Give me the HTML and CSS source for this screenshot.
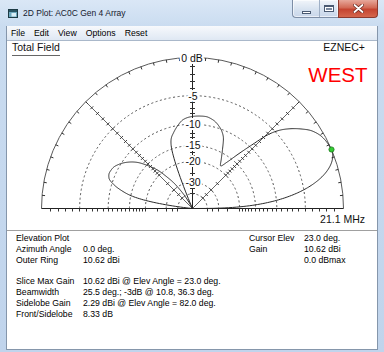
FILE: index.html
```html
<!DOCTYPE html>
<html>
<head>
<meta charset="utf-8">
<title>2D Plot: AC0C Gen 4 Array</title>
<link rel="stylesheet" href="styles.css">
</head>
<body>
<div class="window">
  <div class="titlebar">
    <svg class="app-icon" width="10" height="9" viewBox="0 0 10 9">
      <rect x="0.5" y="0.5" width="9" height="8" fill="#6fa9bf" stroke="#1d3b45"/>
      <rect x="1" y="1" width="8" height="2" fill="#2a5563"/>
      <rect x="3.5" y="4" width="4.5" height="3.5" fill="#d9eef6"/>
    </svg>
    <span class="title">2D Plot: AC0C Gen 4 Array</span>
    <div class="caption-buttons">
      <div class="cap-group">
        <div class="cap-btn cap-min"><span class="glyph-min"></span></div>
        <div class="cap-btn cap-max"><span class="glyph-max"></span></div>
      </div>
      <div class="cap-btn cap-close">
        <svg width="11" height="9" viewBox="0 0 11 9">
          <path d="M1.5 1 L9.5 8 M9.5 1 L1.5 8" class="x-shadow"/>
          <path d="M1.5 1 L9.5 8 M9.5 1 L1.5 8" class="x-glyph"/>
        </svg>
      </div>
    </div>
  </div>
  <div class="client">
    <div class="menubar">
      <span class="menu-item">File</span>
      <span class="menu-item">Edit</span>
      <span class="menu-item">View</span>
      <span class="menu-item">Options</span>
      <span class="menu-item">Reset</span>
    </div>
    <div class="plot">
      <svg id="plot" width="370" height="189" viewBox="7 41 370 189">
        <g id="grid"></g>
        <g id="pattern"></g>
        <text x="12" y="51" class="caption">Total Field</text>
        <line x1="12" y1="55.5" x2="60" y2="55.5" class="caption-rule"/>
        <text x="365" y="51" class="caption end">EZNEC+</text>
        <text x="367.5" y="81.7" class="direction">WEST</text>
        <text x="365" y="223" class="caption end">21.1 MHz</text>
        <text x="192" y="61.5" class="axlabel">0 dB</text>
        <text x="193" y="99.5" class="axlabel">-5</text>
        <text x="193" y="128" class="axlabel">-10</text>
        <text x="193" y="149.3" class="axlabel">-15</text>
        <text x="193" y="165.3" class="axlabel">-20</text>
        <text x="193" y="186.3" class="axlabel">-30</text>
      </svg>
    </div>
    <div class="info">
      <span>Elevation Plot</span><span></span><span>Cursor Elev</span><span>23.0 deg.</span>
      <span>Azimuth Angle</span><span>0.0 deg.</span><span>Gain</span><span>10.62 dBi</span>
      <span>Outer Ring</span><span>10.62 dBi</span><span></span><span>0.0 dBmax</span>
      <span class="blank"></span>
      <span>Slice Max Gain</span><span class="wide">10.62 dBi @ Elev Angle = 23.0 deg.</span>
      <span>Beamwidth</span><span class="wide">25.5 deg.; -3dB @ 10.8, 36.3 deg.</span>
      <span>Sidelobe Gain</span><span class="wide">2.29 dBi @ Elev Angle = 82.0 deg.</span>
      <span>Front/Sidelobe</span><span class="wide">8.33 dB</span>
    </div>
  </div>
</div>
<script src="plot.js"></script>
</body>
</html>
```

FILE: styles.css
```css
* { box-sizing: border-box; margin: 0; padding: 0; }
html, body { width: 384px; height: 352px; overflow: hidden; }
body {
  background: #c3d6ed;
  font-family: "Liberation Sans", Arial, sans-serif;
  color: #000;
}
.window {
  width: 384px;
  height: 352px;
  display: flex;
  flex-direction: column;
  background: linear-gradient(#dae7f6 0, #cadcf0 26px, #c0d4ec 100%);
}
.titlebar {
  height: 26px;
  display: flex;
  align-items: center;
  flex: none;
}
.app-icon { margin-left: 8px; margin-top: 1px; flex: none; }
.title {
  margin-left: 5px;
  font-size: 8.5px;
  color: #14202e;
  white-space: nowrap;
}
.caption-buttons {
  margin-left: auto;
  margin-right: 6px;
  align-self: flex-start;
  display: flex;
  height: 18px;
}
.cap-group {
  display: flex;
  border: 1px solid #7d8ea6;
  border-top: none;
  border-right: none;
  border-radius: 0 0 0 4px;
  background: linear-gradient(#f1f5fa, #d5e1ef 60%, #c9d7ea);
  box-shadow: inset 0 0 0 1px rgba(255,255,255,0.6);
}
.cap-btn {
  height: 17px;
  display: flex;
  align-items: center;
  justify-content: center;
}
.cap-min { width: 26px; }
.cap-max { width: 19px; border-left: 1px solid #9fb0c6; }
.glyph-min {
  width: 9px;
  height: 3px;
  margin-top: 7px;
  background: #fff;
  border: 1px solid #4a5a72;
}
.glyph-max {
  width: 10px;
  height: 7px;
  border: 1px solid #4a5a72;
  border-top-width: 2px;
  background: #fff;
  box-shadow: inset 0 0 0 1px #fff, inset 0 0 0 2px #7b8aa0;
}
.cap-close {
  width: 40px;
  height: 18px;
  border: 1px solid #8c3a2e;
  border-top: none;
  border-radius: 0 0 4px 0;
  background: linear-gradient(#e7a89b, #d26a56 45%, #c54430 55%, #d5674d);
}
.x-shadow { fill: none; stroke: #6d2b22; stroke-width: 3.4; stroke-linecap: round; }
.x-glyph { fill: none; stroke: #fff; stroke-width: 1.8; stroke-linecap: round; }

.client {
  flex: 1;
  margin: 0 6px 2px 6px;
  display: flex;
  flex-direction: column;
  border: 1px solid #8596ab;
  border-top: none;
  background: #fff;
}
.menubar {
  height: 15px;
  flex: none;
  display: flex;
  align-items: center;
  gap: 9px;
  padding-left: 4px;
  background: linear-gradient(#f7f9fc, #dfe8f3);
  border-bottom: 1px solid #aab8ca;
  font-size: 8.7px;
}
.plot {
  height: 190px;
  flex: none;
  border-bottom: 1px solid #a0a0a0;
}
#plot { display: block; }
.ring { fill: none; stroke: #555; stroke-width: 1; stroke-dasharray: 2 2.5; }
.outer { fill: none; stroke: #5a5a5a; stroke-width: 1; }
.spoke { stroke: #666; stroke-width: 1; }
.axis { stroke: #222; stroke-width: 1; }
.tick { fill: none; stroke: #333; stroke-width: 1; }
.lobe { fill: none; stroke: #2a2a2a; stroke-width: 1; stroke-linejoin: round; }
.cursor-dot { fill: #33cc33; stroke: #1c7a1c; stroke-width: 0.8; }
.caption { font-size: 10.5px; fill: #111; }
.caption.end { text-anchor: end; }
.caption-rule { stroke: #666; stroke-width: 1; }
.direction { font-size: 20.5px; fill: #ff0000; text-anchor: end; }
.axlabel {
  font-size: 10.5px;
  fill: #111;
  text-anchor: middle;
  stroke: #fff;
  stroke-width: 4;
  stroke-linejoin: round;
  paint-order: stroke;
}

.info {
  flex: 1;
  display: grid;
  grid-template-columns: 67px 166px 55px auto;
  grid-auto-rows: 10.8px;
  align-content: start;
  padding: 2px 0 0 9px;
  font-size: 8.7px;
  line-height: 10.8px;
  white-space: nowrap;
}
.info .blank { grid-column: 1 / -1; }
.info .wide { grid-column: 2 / -1; }
```

FILE: plot.js
```js
(function () {
  var NS = 'http://www.w3.org/2000/svg';
  var grid = document.getElementById('grid');
  var pat = document.getElementById('pattern');
  var cx = 192.5, cy = 208.5, R = 151;

  function rOf(db) { return R * Math.pow(0.89, -db / 2); }
  function add(parent, tag, attrs) {
    var e = document.createElementNS(NS, tag);
    for (var k in attrs) e.setAttribute(k, attrs[k]);
    parent.appendChild(e);
    return e;
  }
  function arc(r) {
    return 'M' + (cx - r).toFixed(2) + ' ' + cy + ' A' + r.toFixed(2) + ' ' + r.toFixed(2) + ' 0 0 1 ' + (cx + r).toFixed(2) + ' ' + cy;
  }
  function pt(deg, r) {
    var a = deg * Math.PI / 180;
    return [cx + r * Math.cos(a), cy - r * Math.sin(a)];
  }
  function crisp(v) { return Math.round(v - 0.5) + 0.5; }

  [-5, -10, -15, -20, -30, -40].forEach(function (db) {
    add(grid, 'path', { d: arc(rOf(db)), 'class': 'ring' });
  });
  add(grid, 'path', { d: arc(R), 'class': 'outer' });

  [45, 135].forEach(function (deg) {
    var p = pt(deg, R);
    add(grid, 'line', { x1: cx, y1: cy, x2: p[0].toFixed(2), y2: p[1].toFixed(2), 'class': 'spoke' });
  });
  add(grid, 'line', { x1: cx - R, y1: cy, x2: cx + R, y2: cy, 'class': 'axis' });
  add(grid, 'line', { x1: cx, y1: cy, x2: cx, y2: cy - R, 'class': 'axis' });

  var d = '';
  for (var a = 5; a < 180; a += 5) {
    var p1 = pt(a, R), p2 = pt(a, R - 3);
    d += 'M' + p1[0].toFixed(2) + ' ' + p1[1].toFixed(2) + 'L' + p2[0].toFixed(2) + ' ' + p2[1].toFixed(2);
  }
  var tickDb = [];
  for (var i = 1; i <= 20; i++) tickDb.push(-i);
  tickDb.push(-25, -30, -35, -40);
  tickDb.forEach(function (db) {
    var r = rOf(db);
    [cx - r, cx + r].forEach(function (x) {
      d += 'M' + crisp(x) + ' ' + cy + 'V' + (cy + 3);
    });
    var y = crisp(cy - r);
    d += 'M' + (cx - 2.5) + ' ' + y + 'H' + (cx + 2.5);
    [45, 135].forEach(function (deg) {
      var p = pt(deg, r), an = (deg + 90) * Math.PI / 180;
      var dx = 2 * Math.cos(an), dy = -2 * Math.sin(an);
      d += 'M' + (p[0] - dx).toFixed(2) + ' ' + (p[1] - dy).toFixed(2) + 'L' + (p[0] + dx).toFixed(2) + ' ' + (p[1] + dy).toFixed(2);
    });
  });
  add(grid, 'path', { d: d, 'class': 'tick' });

  var table = [
    [23, 0], [26, -0.12], [29, -0.35], [33, -1.0], [36.3, -2.0], [39, -3.0], [42, -4.4],
    [44.2, -6.0], [47, -9.5], [50, -13], [53, -16.2], [56.5, -18.6], [60, -16.5], [63, -14.2],
    [67, -11.2], [72, -9.6], [77, -8.7], [82, -8.33], [87, -8.4], [92, -8.6], [96, -9.0],
    [100, -10.0], [104, -11.3], [107, -12.5], [109, -14.5], [110.5, -19], [111.5, -26],
    [112.5, -40], [113.5, -70], [115, -999], [117, -999], [119, -60], [121, -42],
    [123.7, -32.7], [126, -27], [128.9, -22.7], [132, -18.6], [136.3, -15.2], [140, -12.8],
    [144.7, -10.9], [149, -9.7], [153, -9.0], [157, -8.8], [160, -9.1], [163.4, -10.6],
    [166, -12.6], [168.2, -15], [170, -19], [171.5, -26], [173, -40], [174.5, -80],
    [176, -999], [180, -999]
  ];
  var xs = table.map(function (t) { return t[0]; });
  var ys = table.map(function (t) { return rOf(t[1]); });

  function pchip(xs, ys) {
    var n = xs.length, h = [], del = [], m = [], k;
    for (k = 0; k < n - 1; k++) { h[k] = xs[k + 1] - xs[k]; del[k] = (ys[k + 1] - ys[k]) / h[k]; }
    m[0] = del[0]; m[n - 1] = del[n - 2];
    for (k = 1; k < n - 1; k++) {
      if (del[k - 1] * del[k] <= 0) m[k] = 0;
      else {
        var w1 = 2 * h[k] + h[k - 1], w2 = h[k] + 2 * h[k - 1];
        m[k] = (w1 + w2) / (w1 / del[k - 1] + w2 / del[k]);
      }
    }
    return function (x) {
      var j = 0;
      while (j < n - 2 && x > xs[j + 1]) j++;
      var t = (x - xs[j]) / h[j], t2 = t * t, t3 = t2 * t;
      return (2 * t3 - 3 * t2 + 1) * ys[j] + (t3 - 2 * t2 + t) * h[j] * m[j] +
        (-2 * t3 + 3 * t2) * ys[j + 1] + (t3 - t2) * h[j] * m[j + 1];
    };
  }
  var f = pchip(xs, ys);

  function radius(th) {
    if (th <= 0) return 0;
    if (th < 23) {
      var s = Math.sin(th * 3.913 * Math.PI / 180);
      return rOf(1.15 * 20 * Math.log(s) / Math.LN10);
    }
    return Math.max(0, f(th));
  }

  var pd = '';
  for (var th = 0; th <= 180.001; th += 0.25) {
    var p = pt(th, radius(th));
    pd += (th === 0 ? 'M' : 'L') + p[0].toFixed(2) + ' ' + p[1].toFixed(2);
  }
  pd += 'Z';
  add(pat, 'path', { d: pd, 'class': 'lobe' });

  var dot = pt(23, R);
  add(pat, 'circle', { cx: dot[0].toFixed(2), cy: dot[1].toFixed(2), r: 2.6, 'class': 'cursor-dot' });
})();
```
